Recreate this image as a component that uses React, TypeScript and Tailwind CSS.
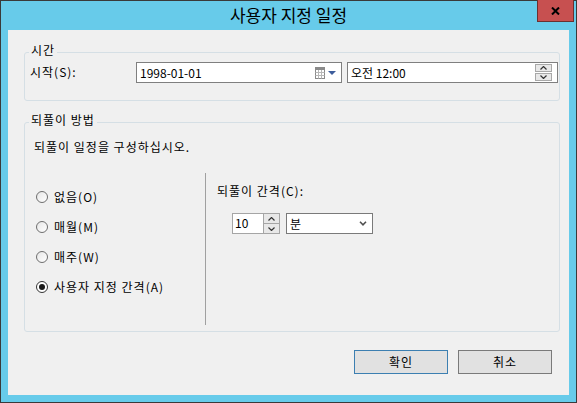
import React from "react";

const SpinUp = () => (
  <svg width="7" height="4" viewBox="0 0 7 4">
    <path d="M0.5 3.5 L3.5 0.5 L6.5 3.5" stroke="#333" strokeWidth="1.2" fill="none" />
  </svg>
);

const SpinDown = () => (
  <svg width="7" height="4" viewBox="0 0 7 4">
    <path d="M0.5 0.5 L3.5 3.5 L6.5 0.5" stroke="#333" strokeWidth="1.2" fill="none" />
  </svg>
);

const Radio = ({ checked, label }: { checked?: boolean; label: string }) => (
  <div className="flex items-center gap-[6px] h-[16px]">
    <span
      className={
        checked
          ? "w-[12px] h-[12px] rounded-full border border-[#333333] bg-white flex items-center justify-center"
          : "w-[12px] h-[12px] rounded-full border border-[#6e6e6e] bg-gradient-to-br from-[#e6e6e6] to-white"
      }
    >
      {checked && <span className="w-[6px] h-[6px] rounded-full bg-[#1a1a1a]" />}
    </span>
    <span>{label}</span>
  </div>
);

const GroupBox = ({
  title,
  className,
  children,
}: {
  title: string;
  className: string;
  children: React.ReactNode;
}) => (
  <div className={"relative ml-[16px] w-[536px] border border-[#d5dfe5] rounded-[3px] " + className}>
    <span className="absolute left-[4px] -top-[11px] px-[2px] bg-[#f0f0f0]">{title}</span>
    {children}
  </div>
);

export default function App() {
  return (
    <div className="w-[577px] h-[403px] flex flex-col bg-[#67cbea] border border-[#3a3a3a] font-['Noto_Sans_CJK_KR',sans-serif] text-[12px] leading-[16px] tracking-[1px] text-black">
      <div className="relative h-[29px] shrink-0 flex items-center justify-center">
        <span className="text-[17px] leading-[20px] tracking-normal -mt-[1px]">사용자 지정 일정</span>
        <div className="absolute -top-px right-[2px] w-[37px] h-[22px] bg-[#c75050] border-r border-b border-l border-[#6b3030] flex items-center justify-center">
          <svg width="9" height="8" viewBox="0 0 9 8">
            <path d="M1 0.5 L8 7.5 M8 0.5 L1 7.5" stroke="#000" strokeWidth="2" />
          </svg>
        </div>
      </div>

      <div className="mx-[7px] mb-[7px] flex-1 bg-[#f0f0f0] flex flex-col">
        <GroupBox title="시간" className="mt-[22px] h-[49px]">
          <div className="flex items-center pt-[9px] pl-[5px]">
            <span className="w-[106px] -mt-[2px]">시작(S):</span>
            <div className="w-[206px] h-[21px] bg-white border border-[#7f7f7f] flex items-center pl-[3px] pr-[5px]">
              <span className="flex-1 tracking-normal">1998-01-01</span>
              <svg width="10" height="12" viewBox="0 0 10 12" className="mr-[3px]">
                <rect x="0.5" y="0.5" width="9" height="11" fill="#fff" stroke="#8a8a8a" />
                <path d="M0.5 5.5 H9.5 M0.5 8.5 H9.5 M3.5 3 V11.5 M6.5 3 V11.5" stroke="#b8b8b8" />
                <rect x="0" y="0" width="10" height="3" fill="#8a8a8a" />
              </svg>
              <svg width="8" height="4" viewBox="0 0 8 4">
                <path d="M0 0 H8 L4 4 Z" fill="#3d5d9c" />
              </svg>
            </div>
            <div className="ml-[5px] w-[211px] h-[21px] bg-white border border-[#7f7f7f] flex items-center pl-[3px] pr-[5px]">
              <span className="flex-1 tracking-normal">오전 12:00</span>
              <div className="flex flex-col gap-[1px]">
                <span className="w-[17px] h-[8px] border border-[#a8a8a8] bg-[#e8e8e8] flex items-center justify-center">
                  <SpinUp />
                </span>
                <span className="w-[17px] h-[8px] border border-[#a8a8a8] bg-[#e8e8e8] flex items-center justify-center">
                  <SpinDown />
                </span>
              </div>
            </div>
          </div>
        </GroupBox>

        <GroupBox title="되풀이 방법" className="mt-[21px] h-[210px]">
          <div className="pt-[16px] pl-[9px]">되풀이 일정을 구성하십시오.</div>
          <div className="mt-[18px] h-[152px] flex">
            <div className="w-[181px] border-r border-[#a0a0a0] pl-[11px] pt-[16px] flex flex-col gap-[14px]">
              <Radio label="없음(O)" />
              <Radio label="매월(M)" />
              <Radio label="매주(W)" />
              <Radio checked label="사용자 지정 간격(A)" />
            </div>
            <div className="pl-[11px] pt-[10px] flex flex-col">
              <span>되풀이 간격(C):</span>
              <div className="mt-[14px] ml-[15px] flex">
                <div className="w-[48px] h-[21px] bg-white border border-[#a5a5a5] flex">
                  <span className="flex-1 pl-[2px] leading-[17px] tracking-normal">10</span>
                  <div className="flex flex-col">
                    <span className="w-[16px] h-[10px] border-l border-b border-[#a5a5a5] bg-[#e8e8e8] flex items-center justify-center">
                      <SpinUp />
                    </span>
                    <span className="w-[16px] h-[9px] border-l border-[#a5a5a5] bg-[#e8e8e8] flex items-center justify-center">
                      <SpinDown />
                    </span>
                  </div>
                </div>
                <div className="ml-[6px] w-[87px] h-[21px] bg-white border border-[#7a7a7a] flex items-center pl-[3px] pr-[5px]">
                  <span className="flex-1">분</span>
                  <svg width="8" height="5" viewBox="0 0 8 5">
                    <path d="M1 0.8 L4 3.8 L7 0.8" stroke="#505050" strokeWidth="1.6" fill="none" />
                  </svg>
                </div>
              </div>
            </div>
          </div>
        </GroupBox>

        <div className="mt-[18px] pr-[17px] flex justify-end gap-[10px]">
          <button className="w-[94px] h-[24px] bg-[#e1e1e1] border border-[#3c7fb1]">확인</button>
          <button className="w-[94px] h-[24px] bg-[#e1e1e1] border border-[#7a7a7a]">취소</button>
        </div>
      </div>
    </div>
  );
}
